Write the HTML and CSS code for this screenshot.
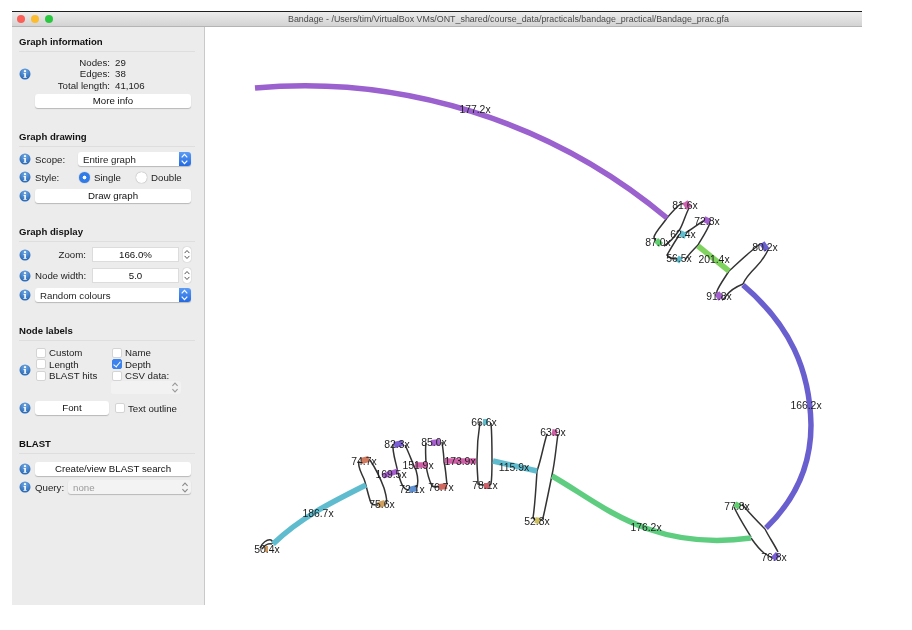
FILE: index.html
```html
<!DOCTYPE html>
<html lang="en">
<head>
<meta charset="utf-8">
<title>Bandage</title>
<link rel="stylesheet" href="styles.css">
</head>
<body>
<svg class="defs" width="0" height="0" aria-hidden="true">
  <defs>
    <radialGradient id="infoGrad" cx="50%" cy="25%" r="85%">
      <stop offset="0" stop-color="#6fa9e6"/>
      <stop offset="1" stop-color="#1c5cab"/>
    </radialGradient>
    <symbol id="info" viewBox="0 0 12 12">
      <circle cx="6" cy="6" r="5.5" fill="url(#infoGrad)"/>
      <circle cx="6" cy="3.2" r="1.1" fill="#fff"/>
      <path d="M4.6 5h2.3v3.9h.8v.9H4.4v-.9h.9V5.9h-.7z" fill="#fff"/>
    </symbol>
    <symbol id="updown" viewBox="0 0 8 12">
      <path d="M1.6 4.6 4 2l2.4 2.6M1.6 7.4 4 10l2.4-2.6" fill="none" stroke="currentColor" stroke-width="1"/>
    </symbol>
  </defs>
</svg>
<div class="window">
  <header class="titlebar">
    <div class="lights"><i class="light red"></i><i class="light amber"></i><i class="light green"></i></div>
    <div class="title">Bandage - /Users/tim/VirtualBox VMs/ONT_shared/course_data/practicals/bandage_practical/Bandage_prac.gfa</div>
  </header>
  <div class="content">
    <aside class="sidebar">
      <section class="section">
        <h2 class="head">Graph information</h2>
        <div class="body">
          <div class="row auto">
            <svg class="info"><use href="#info"/></svg>
            <dl class="stats">
              <dt>Nodes:</dt><dd>29</dd>
              <dt>Edges:</dt><dd>38</dd>
              <dt>Total length:</dt><dd>41,106</dd>
            </dl>
          </div>
          <div class="row indent tight"><button class="btn grow">More info</button></div>
        </div>
      </section>

      <section class="section">
        <h2 class="head">Graph drawing</h2>
        <div class="body">
          <div class="row">
            <svg class="info"><use href="#info"/></svg>
            <span class="lbl scope">Scope:</span>
            <div class="combo grow"><span>Entire graph</span><b class="stepper"><svg><use href="#updown"/></svg></b></div>
          </div>
          <div class="row">
            <svg class="info"><use href="#info"/></svg>
            <span class="lbl style">Style:</span>
            <span class="radio on"></span><span class="lbl single">Single</span>
            <span class="radio"></span><span class="lbl">Double</span>
          </div>
          <div class="row wide">
            <svg class="info"><use href="#info"/></svg>
            <button class="btn grow">Draw graph</button>
          </div>
        </div>
      </section>

      <section class="section">
        <h2 class="head">Graph display</h2>
        <div class="body">
          <div class="row h15">
            <svg class="info"><use href="#info"/></svg>
            <span class="lbl field">Zoom:</span>
            <div class="input">166.0%</div>
            <div class="spin"><svg><use href="#updown"/></svg></div>
          </div>
          <div class="row h15 wider">
            <svg class="info"><use href="#info"/></svg>
            <span class="lbl field">Node width:</span>
            <div class="input">5.0</div>
            <div class="spin"><svg><use href="#updown"/></svg></div>
          </div>
          <div class="row wide">
            <svg class="info"><use href="#info"/></svg>
            <div class="combo grow"><span>Random colours</span><b class="stepper"><svg><use href="#updown"/></svg></b></div>
          </div>
        </div>
      </section>

      <section class="section">
        <h2 class="head">Node labels</h2>
        <div class="body">
          <div class="row auto nudge">
            <svg class="info"><use href="#info"/></svg>
            <div class="checks">
              <label class="check"><i class="box"></i>Custom</label>
              <label class="check"><i class="box"></i>Name</label>
              <label class="check"><i class="box"></i>Length</label>
              <label class="check"><i class="box on"></i>Depth</label>
              <label class="check"><i class="box"></i>BLAST hits</label>
              <label class="check"><i class="box"></i>CSV data:</label>
              <span></span>
              <div class="csv"><svg><use href="#updown"/></svg></div>
            </div>
          </div>
          <div class="row font-row">
            <svg class="info"><use href="#info"/></svg>
            <button class="btn font">Font</button>
            <label class="check outline"><i class="box"></i>Text outline</label>
          </div>
        </div>
      </section>

      <section class="section">
        <h2 class="head">BLAST</h2>
        <div class="body">
          <div class="row first">
            <svg class="info"><use href="#info"/></svg>
            <button class="btn grow">Create/view BLAST search</button>
          </div>
          <div class="row">
            <svg class="info"><use href="#info"/></svg>
            <span class="lbl query">Query:</span>
            <div class="combo grow off"><span>none</span><svg class="chev"><use href="#updown"/></svg></div>
          </div>
        </div>
      </section>
    </aside>

    <main class="canvas">
      <svg class="graph" viewBox="205 27 657 577" width="657" height="577">
        <g class="links">
          <path d="M667 218C663 224 655 232 654 237C654 240 656 241 658 242"/>
          <path d="M667 218C671 213 675 209 678 206C680 204 683 203 686 204"/>
          <path d="M689 208C685 216 683 224 680 229C676 235 672 241 664 246"/>
          <path d="M685 233C693 229 700 222 707 219"/>
          <path d="M710 223C707 231 702 238 698 245C693 250 688 255 685 260"/>
          <path d="M680 234C675 241 671 248 667 255C669 258 675 259 678 259"/>
          <path d="M729 271C738 263 748 253 760 244"/>
          <path d="M768 250C764 258 760 263 756 267C751 272 745 279 743 284"/>
          <path d="M729 271C724 279 720 284 717 291C716 294 718 296 720 298"/>
          <path d="M743 284C738 286 731 289 726 296C725 298 724 299 722 300"/>
          <path d="M734 507C739 518 745 527 751 537"/>
          <path d="M742 504C750 514 758 522 765 529"/>
          <path d="M765 529C769 537 774 544 778 552"/>
          <path d="M751 538C756 545 760 550 764 553C767 555 770 557 773 558"/>
          <path d="M260 548C262 543 267 539 271 540C273 541 273 543 273 544"/>
          <path d="M262 549C264 546 268 543 272 544"/>
          <path d="M359 461C357 466 361 472 364 479C366 484 368 495 371 503C373 506 376 505 378 505"/>
          <path d="M370 460C376 469 381 480 384 488C386 495 388 501 386 504"/>
          <path d="M393 444C392 452 396 462 398 473C401 483 403 490 409 490"/>
          <path d="M405 445C410 455 413 465 416 470C418 477 419 484 416 489"/>
          <path d="M426 443C425 450 426 458 426 465C427 472 429 480 432 486C434 487 437 487 439 486"/>
          <path d="M442 442C443 449 444 456 444 462C446 470 446 478 447 484"/>
          <path d="M480 422C478 435 477 450 477 460C477 470 478 478 478 484C480 485 482 485 484 485"/>
          <path d="M491 423C492 435 492 450 492 460C492 470 492 478 491 484C490 485 489 486 488 486"/>
          <path d="M547 434C543 447 541 460 537 471C536 487 535 505 533 518C534 519 535 520 536 520"/>
          <path d="M558 434C556 447 555 462 552 475C549 490 546 505 543 518C542 520 541 520 540 520"/>
        </g>
        <g class="edges">
          <path class="thick violet" d="M255 88C400 75 550 120 667 218"/>
          <path class="thick indigo" d="M743 285C790 325 810 370 811 425C811 465 795 500 766 528"/>
          <path class="thick lime" d="M698 246L729 271"/>
          <path class="thick grass" d="M552 476C600 503 650 552 751 538"/>
          <path class="thick teal" d="M493 461L537 471"/>
          <path class="thick teal" d="M273 544C300 518 330 503 366 485"/>
          <path class="thick magenta" d="M445 461L476 461"/>
          <path class="thick magenta" d="M415 465L428 465"/>
          <path class="thick purple" d="M383 476L398 471"/>
          <path class="dot" stroke="#d060b0" d="M685 202L689 208"/>
          <path class="dot" stroke="#a45fd0" d="M704 219L710 222"/>
          <path class="dot" stroke="#5fbfcf" d="M680 233L686 236"/>
          <path class="dot" stroke="#5fcf70" d="M656 240L661 245"/>
          <path class="dot" stroke="#5fbfcf" d="M677 258L681 261"/>
          <path class="dot" stroke="#6a5fcf" d="M762 243L767 250"/>
          <path class="dot" stroke="#a45fd0" d="M717 293L721 299"/>
          <path class="dot" stroke="#5fcf70" d="M736 508L739 503"/>
          <path class="dot" stroke="#7a5fd8" d="M773 559L778 554"/>
          <path class="dot" stroke="#cf9a5f" d="M265 549L268 549"/>
          <path class="dot" stroke="#d07a5f" d="M361 461L369 459"/>
          <path class="dot" stroke="#d0a05f" d="M378 505L385 503"/>
          <path class="dot" stroke="#7a5fd8" d="M394 445L403 443"/>
          <path class="dot" stroke="#5f90d0" d="M409 490L417 488"/>
          <path class="dot" stroke="#a85fd0" d="M431 443L440 442"/>
          <path class="dot" stroke="#d0685f" d="M439 487L447 486"/>
          <path class="dot" stroke="#5fbfcf" d="M483 422L488 422"/>
          <path class="dot" stroke="#d05f6a" d="M484 486L489 486"/>
          <path class="dot" stroke="#d05fa8" d="M552 432L557 433"/>
          <path class="dot" stroke="#cfc05f" d="M535 520L540 521"/>
        </g>
        <g class="labels">
          <text x="475" y="113">177.2x</text>
          <text x="685" y="209">81.6x</text>
          <text x="707" y="225">72.8x</text>
          <text x="683" y="238">62.4x</text>
          <text x="658" y="246">87.0x</text>
          <text x="679" y="262">56.5x</text>
          <text x="714" y="263">201.4x</text>
          <text x="765" y="251">80.2x</text>
          <text x="719" y="300">91.8x</text>
          <text x="806" y="409">166.2x</text>
          <text x="737" y="510">77.8x</text>
          <text x="774" y="561">76.8x</text>
          <text x="646" y="531">176.2x</text>
          <text x="537" y="525">52.8x</text>
          <text x="553" y="436">63.9x</text>
          <text x="514" y="471">115.9x</text>
          <text x="484" y="426">66.6x</text>
          <text x="485" y="489">78.1x</text>
          <text x="460" y="465">173.9x</text>
          <text x="434" y="446">85.0x</text>
          <text x="441" y="491">76.7x</text>
          <text x="418" y="469">151.9x</text>
          <text x="412" y="493">72.1x</text>
          <text x="397" y="448">82.3x</text>
          <text x="391" y="478">169.5x</text>
          <text x="364" y="465">74.7x</text>
          <text x="382" y="508">75.6x</text>
          <text x="318" y="517">186.7x</text>
          <text x="267" y="553">50.4x</text>
        </g>
      </svg>
    </main>
  </div>
</div>
</body>
</html>
```

FILE: styles.css
```css
* { box-sizing: border-box; }
html, body { margin: 0; height: 100%; background: #fff; }
body {
  padding: 11px 0 0 12px;
  font-family: "Liberation Sans", Arial, sans-serif;
  font-size: 9.7px;
  color: #1c1c1c;
  overflow: hidden;
}
.defs { position: absolute; }

.window {
  width: 850px;
  height: 594px;
  display: flex;
  flex-direction: column;
  border-top: 1px solid #1e1e1e;
  filter: blur(.3px);
}
.titlebar {
  height: 15px;
  display: flex;
  align-items: center;
  position: relative;
  background: linear-gradient(#ececec, #d3d3d3);
  border-bottom: 1px solid #b4b4b4;
}
.lights { display: flex; gap: 5.5px; padding-left: 4.5px; }
.light { width: 8.5px; height: 8.5px; border-radius: 50%; }
.red { background: #fc5f57; }
.amber { background: #fdbc2e; }
.green { background: #2ac840; }
.title {
  position: absolute;
  left: 276px;
  top: 1px;
  font-size: 8.9px;
  line-height: 13px;
  color: #4a4a4a;
  white-space: nowrap;
}

.content { flex: 1; display: flex; min-height: 0; }
.sidebar {
  width: 193px;
  flex: none;
  background: #ececec;
  border-right: 1px solid #c9c9c9;
  padding: 7px 13px 0 7px;
}
.section + .section { margin-top: 21px; }
.head {
  margin: 0 -4px 0 0;
  height: 18px;
  padding-top: 2px;
  font-size: 9.6px;
  line-height: 12px;
  font-weight: bold;
  color: #111;
  border-bottom: 1px solid #dedede;
}
.body { display: flex; flex-direction: column; gap: 4px; padding-top: 5px; }
.row { display: flex; align-items: center; height: 14px; flex: none; }
.row.auto { height: auto; }
.row.h15 { height: 15px; }
.row.wide { margin-top: 1px; }
.row.wider { margin-top: 2px; }
.row.first { margin-top: 3px; }
.row.tight { margin-top: -1px; }
.row.indent { padding-left: 16px; }
.row.nudge { margin-top: 1px; }
.row.font-row { margin-top: 4px; }
.info { width: 12px; height: 12px; flex: none; margin-right: 4px; }
.grow { flex: 1; min-width: 0; }

.stats {
  margin: 0;
  flex: 1;
  display: grid;
  grid-template-columns: 75px auto;
  column-gap: 5px;
  line-height: 11.4px;
}
.stats dt { text-align: right; }
.stats dd { margin: 0; }

.btn {
  height: 14px;
  padding: 0;
  border: 0;
  border-radius: 3px;
  background: #fff;
  box-shadow: 0 1px 1px rgba(0, 0, 0, .22);
  font: inherit;
  line-height: 14px;
  color: #111;
  text-align: center;
}
.btn.font { width: 74px; flex: none; margin-right: 6px; }

.lbl { white-space: nowrap; }
.scope { width: 43px; flex: none; }
.style { width: 44px; flex: none; }
.single { width: 42px; flex: none; }
.query { width: 33px; flex: none; }
.field { width: 51px; flex: none; text-align: right; margin-right: 6px; }

.combo {
  height: 14px;
  display: flex;
  align-items: center;
  padding-left: 5px;
  border-radius: 3px;
  background: #fff;
  box-shadow: 0 1px 1px rgba(0, 0, 0, .22);
  overflow: hidden;
}
.combo span { flex: 1; }
.stepper {
  width: 12px;
  height: 14px;
  display: block;
  color: #fff;
  background: linear-gradient(#5c9df5, #2369e0);
}
.stepper svg { width: 11px; height: 14px; display: block; }
.combo.off { background: #f3f3f3; color: #9a9a9a; }
.chev { width: 12px; height: 13px; color: #8a8a8a; flex: none; }

.radio {
  width: 11px;
  height: 11px;
  flex: none;
  margin-right: 4px;
  border-radius: 50%;
  background: #fff;
  box-shadow: 0 0 1px rgba(0, 0, 0, .5);
}
.radio.on { background: radial-gradient(circle, #fff 0 1.6px, #2f7bea 2.2px); }

.input {
  width: 87px;
  height: 15px;
  flex: none;
  background: #fff;
  border: 1px solid #dcdcdc;
  text-align: center;
  line-height: 13px;
  color: #111;
}
.spin {
  width: 8px;
  height: 15px;
  flex: none;
  margin-left: 4px;
  border-radius: 3px;
  background: #fff;
  color: #555;
  box-shadow: 0 0 1px rgba(0, 0, 0, .4);
}
.spin svg { width: 8px; height: 15px; display: block; }

.checks {
  display: grid;
  grid-template-columns: 76px auto;
  grid-auto-rows: 11.5px;
  line-height: 11.5px;
  flex: 1;
}
.check { display: flex; align-items: center; white-space: nowrap; padding-left: 1px; }
.box {
  width: 10px;
  height: 10px;
  flex: none;
  margin-right: 3px;
  border-radius: 2px;
  background: #fff;
  border: 1px solid #d4d4d4;
}
.box.on {
  background: #3b82ee;
  border-color: #3b82ee;
  position: relative;
}
.box.on::after {
  content: "";
  position: absolute;
  left: 2px;
  top: 0;
  width: 3px;
  height: 6px;
  border: solid #fff;
  border-width: 0 1px 1px 0;
  transform: rotate(40deg);
}
.outline { padding-left: 0; }
.csv {
  width: 70px;
  height: 13px;
  margin-top: -1px;
  border-radius: 3px;
  background: #f2f2f2;
  color: #999;
  display: flex;
  justify-content: flex-end;
}
.csv svg { width: 12px; height: 13px; }

.canvas { flex: 1; min-width: 0; background: #fff; }
.graph { display: block; }
.links path { fill: none; stroke: #333; stroke-width: 1.5; }
.edges path { fill: none; }
.thick { stroke-width: 5.5; }
.dot { stroke-width: 6; }
.violet { stroke: #9a61cf; }
.indigo { stroke: #6a5fcf; }
.lime { stroke: #7fd35e; }
.grass { stroke: #5fcd7f; }
.teal { stroke: #5fbccf; }
.magenta { stroke: #d05fa8; }
.purple { stroke: #a85fd0; }
.labels text {
  font-family: "Liberation Sans", Arial, sans-serif;
  font-size: 10.4px;
  fill: #1c1c1c;
  text-anchor: middle;
}
```
